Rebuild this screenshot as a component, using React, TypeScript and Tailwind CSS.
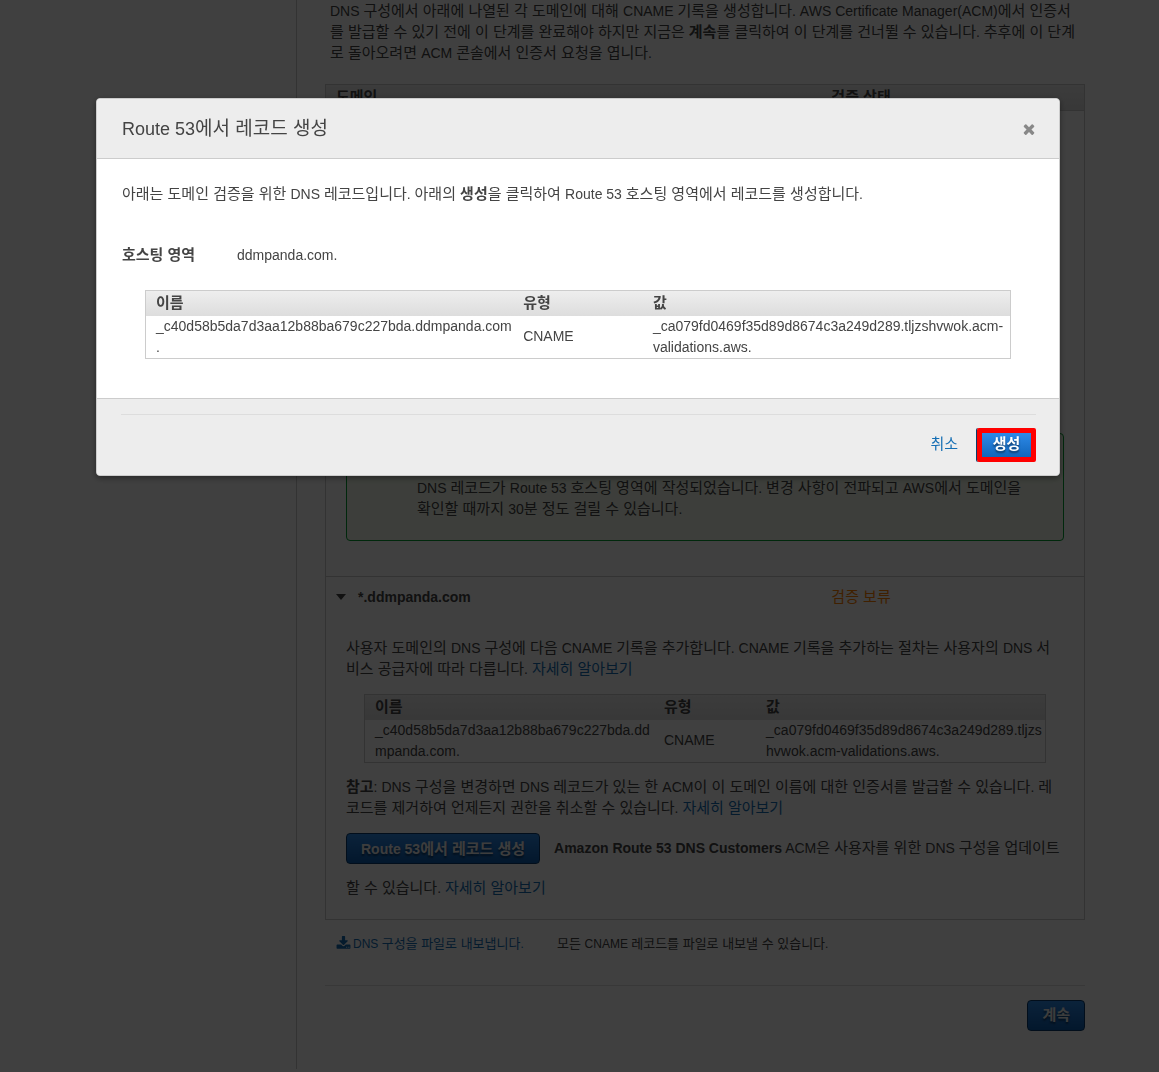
import type { ReactNode } from "react";

type Size = "sm" | "base" | "lg";

const hangulSize: Record<Size, string> = {
  sm: "text-[13px] leading-none",
  base: "text-[15px] leading-none",
  lg: "text-[19px] leading-none",
};

/** Sets Hangul runs one step larger than the Latin text around them. */
function T({ children, size = "base" }: { children: string; size?: Size }) {
  const runs = children.split(/([\u3131-\ud79d]+(?: +[\u3131-\ud79d]+)* ?)/);
  return (
    <>
      {runs.map((run, i) =>
        i % 2 === 1 ? (
          <span key={i} className={hangulSize[size]}>
            {run}
          </span>
        ) : (
          run
        ),
      )}
    </>
  );
}

function TextLink({ children, size = "base" }: { children: string; size?: Size }) {
  return (
    <a href="#" className="text-[#146eb4]">
      <T size={size}>{children}</T>
    </a>
  );
}

function PrimaryButton({ children }: { children: string }) {
  return (
    <button
      type="button"
      className="h-[31px] rounded border border-[#0a3b6b] bg-linear-to-b from-[#2d8ae8] to-[#0c5db0] px-3.5 align-middle leading-5 font-bold text-[#f4f4f4] [text-shadow:0_2px_2px_rgba(0,0,0,0.5)]"
    >
      <T>{children}</T>
    </button>
  );
}

function RecordTable({ name, value }: { name: string; value: string }) {
  return (
    <table className="w-full table-fixed border border-[#ccc] text-left">
      <thead>
        <tr className="h-[25px] bg-linear-to-b from-[#eee] to-[#ddd]">
          <th className="w-[42.5%] py-0 pl-2.5">
            <T>이름</T>
          </th>
          <th className="w-[15%] py-0 pl-2.5">
            <T>유형</T>
          </th>
          <th className="py-0 pl-2.5">
            <T>값</T>
          </th>
        </tr>
      </thead>
      <tbody>
        <tr>
          <td className="pl-2.5 break-words">{name}</td>
          <td className="pl-2.5">CNAME</td>
          <td className="pl-2.5 break-words">{value}</td>
        </tr>
      </tbody>
    </table>
  );
}

const RECORD = {
  name: "_c40d58b5da7d3aa12b88ba679c227bda.ddmpanda.com.",
  value: "_ca079fd0469f35d89d8674c3a249d289.tljzshvwok.acm-validations.aws.",
};

function TwoColumns({ left, right, className }: { left: ReactNode; right: ReactNode; className: string }) {
  return (
    <div className={className}>
      <div className="w-2/3 pl-[10px]">{left}</div>
      <div className="w-1/3">{right}</div>
    </div>
  );
}

function Page() {
  return (
    <div className="flex">
      <aside className="w-[297px] shrink-0 border-r border-[#ccc]" />
      <main className="min-w-0 flex-1 pt-px pr-[74px] pb-[38px] pl-7">
        <p className="px-[5px]">
          <T>
            DNS 구성에서 아래에 나열된 각 도메인에 대해 CNAME 기록을 생성합니다. AWS Certificate Manager(ACM)에서 인증서를
            발급할 수 있기 전에 이 단계를 완료해야 하지만 지금은
          </T>{" "}
          <b>
            <T>계속</T>
          </b>
          <T>를 클릭하여 이 단계를 건너뛸 수 있습니다. 추후에 이 단계로 돌아오려면 ACM 콘솔에서 인증서 요청을 엽니다.</T>
        </p>

        <section className="mt-5 border border-[#ccc]">
          <TwoColumns
            className="flex h-[26px] items-center border-b border-[#ccc] bg-linear-to-b from-[#eee] to-[#ddd] font-bold"
            left={<T>도메인</T>}
            right={<T>검증 상태</T>}
          />

          <div className="border-b border-[#ccc] px-5 pt-[322px] pb-[35px]">
            <div className="rounded border border-[#00a030] bg-[#f2f8ea] pt-[44px] pr-8 pb-5 pl-[70px]">
              <T>
                DNS 레코드가 Route 53 호스팅 영역에 작성되었습니다. 변경 사항이 전파되고 AWS에서 도메인을 확인할 때까지 30분
                정도 걸릴 수 있습니다.
              </T>
            </div>
          </div>

          <TwoColumns
            className="flex h-10 items-center"
            left={
              <button type="button" className="flex items-center gap-3 font-bold">
                <svg viewBox="0 0 10 6" className="h-[6px] w-[10px]" fill="currentColor" aria-hidden="true">
                  <path d="M0 0h10L5 6z" />
                </svg>
                *.ddmpanda.com
              </button>
            }
            right={
              <span className="text-[#ff8000]">
                <T>검증 보류</T>
              </span>
            }
          />

          <div className="px-5 pt-[21px] pb-[11px]">
            <p className="pr-1">
              <T>
                사용자 도메인의 DNS 구성에 다음 CNAME 기록을 추가합니다. CNAME 기록을 추가하는 절차는 사용자의 DNS 서비스
                공급자에 따라 다릅니다.
              </T>{" "}
              <TextLink>자세히 알아보기</TextLink>
            </p>
            <div className="mx-[18px] my-3.5">
              <RecordTable {...RECORD} />
            </div>
            <p>
              <b>
                <T>참고</T>
              </b>
              <T>
                : DNS 구성을 변경하면 DNS 레코드가 있는 한 ACM이 이 도메인 이름에 대한 인증서를 발급할 수 있습니다.
                레코드를 제거하여 언제든지 권한을 취소할 수 있습니다.
              </T>{" "}
              <TextLink>자세히 알아보기</TextLink>
            </p>
            <p className="mt-[9px] leading-10">
              <span className="mr-3.5">
                <PrimaryButton>Route 53에서 레코드 생성</PrimaryButton>
              </span>
              <b>Amazon Route 53 DNS Customers</b>{" "}
              <T>ACM은 사용자를 위한 DNS 구성을 업데이트할 수 있습니다.</T> <TextLink>자세히 알아보기</TextLink>
            </p>
          </div>
        </section>

        <div className="flex items-center border-b border-[#ddd] pt-3.5 pb-[31px] pl-[11px] text-xs leading-5">
          <a href="#" className="flex w-[221px] items-center gap-[2px] text-[#146eb4]">
            <svg viewBox="0 0 1792 1792" className="size-[15px]" fill="currentColor" aria-hidden="true">
              <path d="M1344 1344q0-26-19-45t-45-19-45 19-19 45 19 45 45 19 45-19 19-45zm256 0q0-26-19-45t-45-19-45 19-19 45 19 45 45 19 45-19 19-45zm128-224v320q0 40-28 68t-68 28h-1472q-40 0-68-28t-28-68v-320q0-40 28-68t68-28h465l135 136q58 56 136 56t136-56l136-136h464q40 0 68 28t28 68zm-325-569q17 41-14 70l-448 448q-18 19-45 19t-45-19l-448-448q-31-29-14-70 17-39 59-39h256v-448q0-26 19-45t45-19h256q26 0 45 19t19 45v448h256q42 0 59 39z" />
            </svg>
            <span>
              <T size="sm">DNS 구성을 파일로 내보냅니다.</T>
            </span>
          </a>
          <span>
            <T size="sm">모든 CNAME 레코드를 파일로 내보낼 수 있습니다.</T>
          </span>
        </div>

        <div className="flex justify-end pt-3.5">
          <PrimaryButton>계속</PrimaryButton>
        </div>
      </main>
    </div>
  );
}

function CreateRecordDialog() {
  return (
    <div className="fixed inset-0 bg-black/75 pt-[98px] pr-[99px] pl-24">
      <div
        role="dialog"
        aria-modal="true"
        aria-labelledby="dialog-title"
        className="rounded border border-[#ccc] bg-white shadow-[0_2px_6px_rgba(0,0,0,0.4)]"
      >
        <header className="flex h-[60px] items-center justify-between rounded-t border-b border-[#ccc] bg-[#ededed] pr-[22px] pl-[25px]">
          <h2 id="dialog-title" className="text-lg leading-6">
            <T size="lg">Route 53에서 레코드 생성</T>
          </h2>
          <button type="button" aria-label="닫기" className="text-[#888]">
            <svg viewBox="0 0 1792 1792" className="size-4" fill="currentColor" aria-hidden="true">
              <path d="M1490 1322q0 40-28 68l-136 136q-28 28-68 28t-68-28l-294-294-294 294q-28 28-68 28t-68-28l-136-136q-28-28-28-68t28-68l294-294-294-294q-28-28-28-68t28-68l136-136q28-28 68-28t68 28l294 294 294-294q28-28 68-28t68 28l136 136q28 28 28 68t-28 68l-294 294 294 294q28 28 28 68z" />
            </svg>
          </button>
        </header>

        <div className="px-[25px] pt-[25px] pb-[39px]">
          <p>
            <T>아래는 도메인 검증을 위한 DNS 레코드입니다. 아래의 </T>
            <b>
              <T>생성</T>
            </b>
            <T>을 클릭하여 Route 53 호스팅 영역에서 레코드를 생성합니다.</T>
          </p>
          <dl className="mt-10 flex">
            <dt className="w-[115px] font-bold">
              <T>호스팅 영역</T>
            </dt>
            <dd>ddmpanda.com.</dd>
          </dl>
          <div className="mx-[23px] mt-6">
            <RecordTable {...RECORD} />
          </div>
        </div>

        <footer className="rounded-b border-t border-[#ccc] bg-[#ededed] pt-[15px] pr-[23px] pb-[13px] pl-6">
          <div className="flex items-center justify-end gap-[19px] border-t border-[#ddd] pt-[13px]">
            <button type="button" className="text-[#146eb4]">
              <T>취소</T>
            </button>
            <button
              type="button"
              className="h-[34px] w-[59px] rounded-xs border-[5px] border-[#f00] bg-linear-to-b from-[#2d8ae8] to-[#1166bb] font-bold text-white shadow-[-1px_0_0_#0a3b6b] [text-shadow:0_2px_2px_rgba(0,0,0,0.5)]"
            >
              <T>생성</T>
            </button>
          </div>
        </footer>
      </div>
    </div>
  );
}

export default function App() {
  return (
    <div className="bg-white font-['Liberation_Sans','Noto_Sans_CJK_KR',sans-serif] text-sm leading-[21px] text-[#444]">
      <Page />
      <CreateRecordDialog />
    </div>
  );
}
